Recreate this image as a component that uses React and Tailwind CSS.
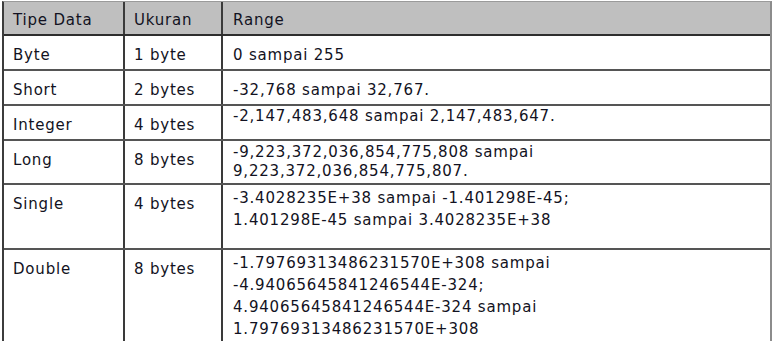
import React from 'react';

const rows = [
  { name: 'Byte', size: '1 byte', range: ['0 sampai 255'], h: 'h-[35px]', rp: 'pt-[9px]', lh: 'leading-[20px]' },
  { name: 'Short', size: '2 bytes', range: ['-32,768 sampai 32,767.'], h: 'h-[35px]', rp: 'pt-[9px]', lh: 'leading-[20px]' },
  { name: 'Integer', size: '4 bytes', range: ['-2,147,483,648 sampai 2,147,483,647.'], h: 'h-[35px]', rp: 'pt-0', lh: 'leading-[20px]' },
  {
    name: 'Long',
    size: '8 bytes',
    range: ['-9,223,372,036,854,775,808 sampai', '9,223,372,036,854,775,807.'],
    h: 'h-[44px]',
    rp: 'pt-[2px]',
    lh: 'leading-[19px]',
  },
  {
    name: 'Single',
    size: '4 bytes',
    range: ['-3.4028235E+38 sampai -1.401298E-45;', '1.401298E-45 sampai 3.4028235E+38'],
    h: 'h-[65px]',
    rp: 'pt-[2px]',
    lh: 'leading-[22px]',
  },
  {
    name: 'Double',
    size: '8 bytes',
    range: [
      '-1.79769313486231570E+308 sampai',
      '-4.94065645841246544E-324;',
      '4.94065645841246544E-324 sampai',
      '1.79769313486231570E+308',
    ],
    h: 'h-[100px]',
    rp: 'pt-[2px]',
    lh: 'leading-[22px]',
    last: true,
  },
];

export default function App() {
  return (
    <div className="w-[773px] h-[341px] overflow-hidden bg-white pt-[1px] pl-[2px]">
      <div
        className="w-[770px] border-t border-t-[#9a9a9a] border-l-2 border-l-[#3c3c3c] border-r-2 border-r-[#8c8c8c] text-[#121222] text-[15px] tracking-[0.8px]"
        style={{ fontFamily: '"DejaVu Sans", sans-serif' }}
      >
        {/* header */}
        <div className="grid grid-cols-[121px_98px_1fr] h-[34px] bg-[#bfbfbf] border-b-2 border-b-[#2e2e2e]">
          <div className="border-r-2 border-r-[#3a3a3a] pl-[9px] pt-[8px] leading-[20px]">Tipe Data</div>
          <div className="border-r-2 border-r-[#3a3a3a] pl-[9px] pt-[8px] leading-[20px]">Ukuran</div>
          <div className="pl-[10px] pt-[8px] leading-[20px]">Range</div>
        </div>

        {rows.map((r) => (
          <div
            key={r.name}
            className={`grid grid-cols-[121px_98px_1fr] ${r.h} ${r.last ? '' : 'border-b-2 border-b-[#555555]'}`}
          >
            <div className="border-r-2 border-r-[#3a3a3a] pl-[9px] pt-[9px] leading-[20px]">{r.name}</div>
            <div className="border-r-2 border-r-[#3a3a3a] pl-[9px] pt-[9px] leading-[20px]">{r.size}</div>
            <div className={`pl-[10px] ${r.rp} ${r.lh}`}>
              {r.range.map((line, i) => (
                <div key={i}>{line}</div>
              ))}
            </div>
          </div>
        ))}
      </div>
    </div>
  );
}
